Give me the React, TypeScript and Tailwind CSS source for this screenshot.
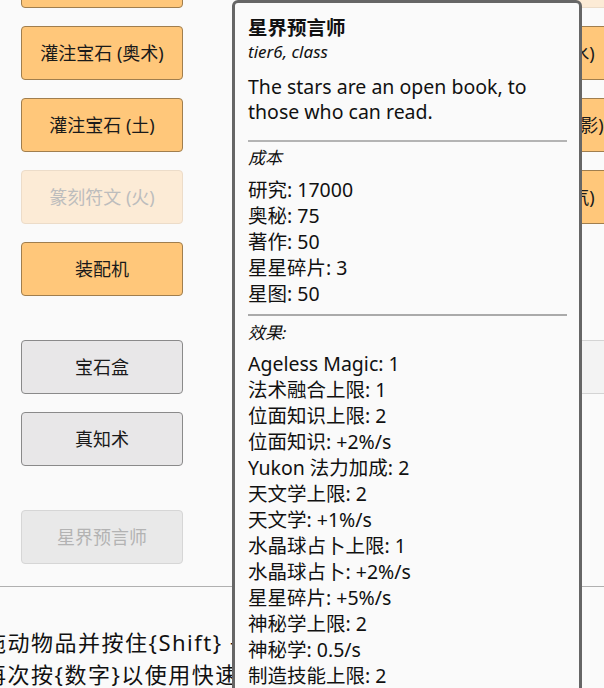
import React from 'react';

type Kind = 'orange' | 'orangeOff' | 'gray' | 'grayOff' | 'grayLight' | 'empty';

type Cell = { label: string; kind: Kind };

const kindClasses: Record<Kind, string> = {
  orange: 'bg-[#ffc77a] border-[#a07e4e] text-[#1a1a1a]',
  orangeOff: 'bg-[#fcebd6] border-[#ecdcc9] text-[#bdbdbd]',
  gray: 'bg-[#e8e7e8] border-[#8a8a8a] text-[#1a1a1a]',
  grayOff: 'bg-[#e9e9e9] border-[#d6d6d6] text-[#b3b3b3]',
  grayLight: 'bg-[#f3f3f3] border-[#d4d4d4] text-[#b3b3b3]',
  empty: '',
};

// left / right pairs, row by row
const sections: Cell[][] = [
  [
    { label: '灌注宝石 (火)', kind: 'orange' },
    { label: '篆刻符文 (水)', kind: 'orangeOff' },
    { label: '灌注宝石 (奥术)', kind: 'orange' },
    { label: '灌注宝石 (水)', kind: 'orange' },
    { label: '灌注宝石 (土)', kind: 'orange' },
    { label: '灌注宝石 (暗影)', kind: 'orange' },
    { label: '篆刻符文 (火)', kind: 'orangeOff' },
    { label: '灌注宝石 (气)', kind: 'orange' },
    { label: '装配机', kind: 'orange' },
    { label: '', kind: 'empty' },
  ],
  [
    { label: '宝石盒', kind: 'gray' },
    { label: '魔法书', kind: 'grayLight' },
    { label: '真知术', kind: 'gray' },
    { label: '', kind: 'empty' },
  ],
  [{ label: '星界预言师', kind: 'grayOff' }],
];

const costs = ['研究: 17000', '奥秘: 75', '著作: 50', '星星碎片: 3', '星图: 50'];

const effects = [
  'Ageless Magic: 1',
  '法术融合上限: 1',
  '位面知识上限: 2',
  '位面知识: +2%/s',
  'Yukon 法力加成: 2',
  '天文学上限: 2',
  '天文学: +1%/s',
  '水晶球占卜上限: 1',
  '水晶球占卜: +2%/s',
  '星星碎片: +5%/s',
  '神秘学上限: 2',
  '神秘学: 0.5/s',
  '制造技能上限: 2',
];

const ActionButton: React.FC<{ cell: Cell }> = ({ cell }) => {
  if (cell.kind === 'empty') return <div className="h-[54px]" />;
  return (
    <button
      type="button"
      className={`h-[54px] w-[162px] rounded-[4px] border text-[18px] leading-none whitespace-nowrap ${kindClasses[cell.kind]}`}
    >
      {cell.label}
    </button>
  );
};

const Tooltip: React.FC = () => (
  <div className="absolute left-[232px] top-0 w-[350px] rounded-t-[6px] border-[3px] border-[#666666] bg-[#fafafa] pl-[13px] pr-[12px] pt-[13px] pb-[60px] text-[#111]">
    <div className="text-[19.5px] font-bold leading-[24px]">星界预言师</div>
    <div className="text-[17px] italic leading-[24px]">tier6, class</div>
    <p className="mt-[10px] text-[19.5px] leading-[25px]">The stars are an open book, to those who can read.</p>

    <div className="mt-[16px] h-[2px] bg-[#b4b4b4]" />
    <div className="mt-[4px] text-[17px] italic leading-[24px]">成本</div>
    <div className="mt-[7px] text-[19.5px] leading-[26px]">
      {costs.map((c) => (
        <div key={c}>{c}</div>
      ))}
    </div>

    <div className="mt-[7px] h-[2px] bg-[#aaaaaa]" />
    <div className="mt-[5px] text-[17px] italic leading-[24px]">效果:</div>
    <div className="mt-[6px] text-[19.5px] leading-[26px]">
      {effects.map((e) => (
        <div key={e} className="whitespace-nowrap">
          {e}
        </div>
      ))}
    </div>
  </div>
);

const App: React.FC = () => {
  return (
    <div
      className="relative h-[688px] w-full overflow-hidden bg-[#fafafa] text-[#111]"
      style={{ fontFamily: '"Noto Sans", "Noto Sans CJK SC", sans-serif' }}
    >
      <div className="-mt-[46px] flex flex-col gap-[44px] pl-[21px]">
        {sections.map((cells, i) => (
          <div key={i} className="grid grid-cols-[162px_162px] gap-x-[278px] gap-y-[18px]">
            {cells.map((cell, j) => (
              <ActionButton key={j} cell={cell} />
            ))}
          </div>
        ))}
      </div>

      <div className="mt-[22px] h-px bg-[#b0b0b0]" />

      <div className="-ml-[16px] mt-[39px] whitespace-nowrap text-[22px] leading-[32px] tracking-[1.5px]">
        <div>拖动物品并按住{'{Shift}'} + {'{数字}'}以设置快捷栏</div>
        <div>再次按{'{数字}'}以使用快速栏物品</div>
      </div>

      <Tooltip />
    </div>
  );
};

export default App;
